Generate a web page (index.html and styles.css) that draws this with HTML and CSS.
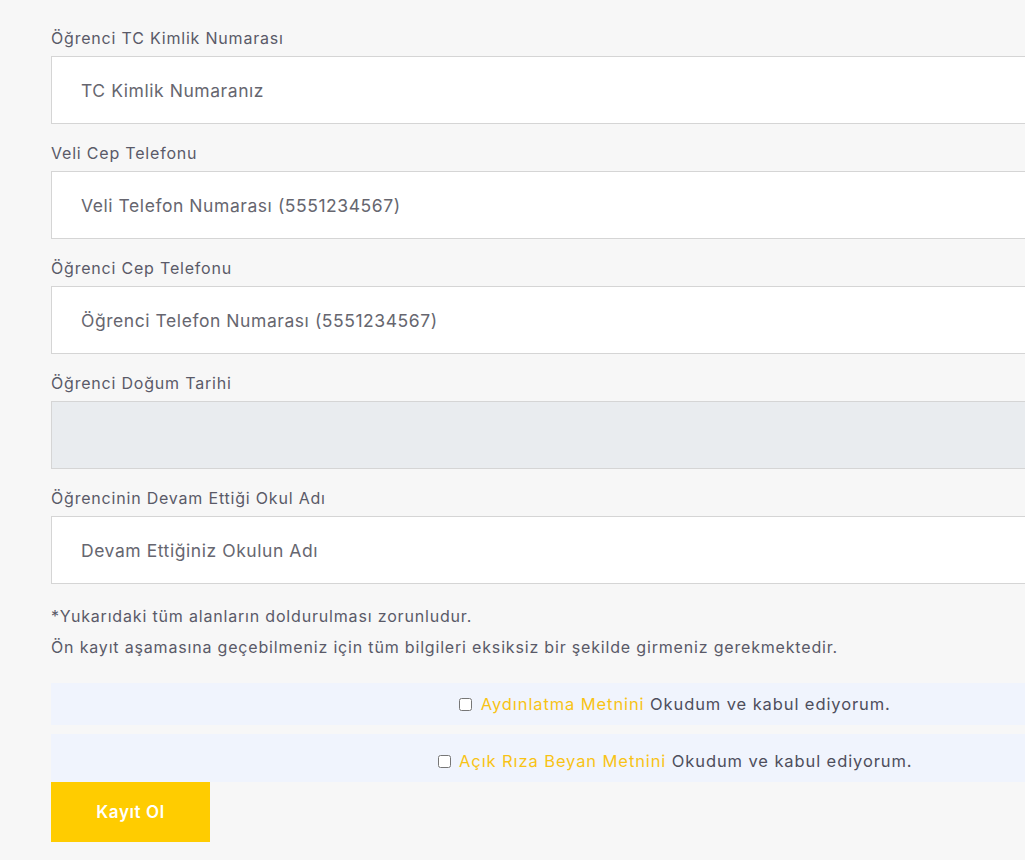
FILE: index.html
```html
<!DOCTYPE html>
<html lang="tr">
<head>
<meta charset="utf-8">
<title>Kayıt</title>
<link rel="stylesheet" href="styles.css">
</head>
<body>
<form class="form">
  <div class="field">
    <label class="label">Öğrenci TC Kimlik Numarası</label>
    <input class="input" type="text" placeholder="TC Kimlik Numaranız">
  </div>
  <div class="field">
    <label class="label">Veli Cep Telefonu</label>
    <input class="input" type="text" placeholder="Veli Telefon Numarası (5551234567)">
  </div>
  <div class="field">
    <label class="label">Öğrenci Cep Telefonu</label>
    <input class="input" type="text" placeholder="Öğrenci Telefon Numarası (5551234567)">
  </div>
  <div class="field">
    <label class="label">Öğrenci Doğum Tarihi</label>
    <input class="input input-disabled" type="text" disabled>
  </div>
  <div class="field">
    <label class="label">Öğrencinin Devam Ettiği Okul Adı</label>
    <input class="input" type="text" placeholder="Devam Ettiğiniz Okulun Adı">
  </div>
  <div class="notes">
    <p>*Yukarıdaki tüm alanların doldurulması zorunludur.</p>
    <p>Ön kayıt aşamasına geçebilmeniz için tüm bilgileri eksiksiz bir şekilde girmeniz gerekmektedir.</p>
  </div>
  <div class="consent consent-1">
    <label><input type="checkbox" class="check"> <a class="link">Aydınlatma Metnini</a> Okudum ve kabul ediyorum.</label>
  </div>
  <div class="consent consent-2">
    <label><input type="checkbox" class="check"> <a class="link">Açık Rıza Beyan Metnini</a> Okudum ve kabul ediyorum.</label>
  </div>
  <button type="button" class="submit">Kayıt Ol</button>
</form>
</body>
</html>
```

FILE: styles.css
```css
html, body {
  margin: 0;
  padding: 0;
  background: #f7f7f7;
  overflow: hidden;
}
body {
  font-family: Inter, "Open Sans", "Liberation Sans", sans-serif;
  color: #5a5a68;
}
.form {
  width: 1248px;
  padding: 26px 0 0 51px;
}
.field {
  margin-bottom: 17px;
}
.label {
  display: block;
  font-size: 16px;
  letter-spacing: 0.8px;
  line-height: 24px;
  margin-bottom: 6px;
  color: #5a5a68;
}
.input {
  display: block;
  box-sizing: border-box;
  width: 100%;
  height: 68px;
  margin: 0;
  padding: 0 29px;
  border: 1px solid #d5d5d5;
  background: #ffffff;
  font-family: inherit;
  font-size: 17.5px;
  letter-spacing: 0.56px;
  color: #5a5a68;
  outline: none;
}
.input::placeholder {
  color: #66666f;
  opacity: 1;
}
.input-disabled {
  background: #e9ecef;
}
.notes {
  margin-top: 2px;
}
.notes p {
  margin: 0;
  font-size: 16px;
  letter-spacing: 0.82px;
  line-height: 31px;
  color: #5a5a68;
}
.consent {
  background: #f0f4fd;
  text-align: center;
  font-size: 16.5px;
  letter-spacing: 0.9px;
  color: #4e4e5c;
  display: flex;
  align-items: center;
  justify-content: center;
}
.consent-1 {
  margin-top: 20px;
  height: 42px;
}
.consent-2 {
  margin-top: 9px;
  height: 48px;
  padding-top: 6px;
  box-sizing: border-box;
}
.check {
  width: 13px;
  height: 13px;
  margin: 0 3px 0 0;
  vertical-align: -1px;
}
.link {
  color: #f8c315;
  text-decoration: none;
}
.submit {
  display: block;
  width: 159px;
  height: 60px;
  border: none;
  background: #ffcc00;
  color: #ffffff;
  font-family: inherit;
  font-weight: 600;
  font-size: 17px;
  letter-spacing: 0.6px;
  cursor: pointer;
}
```
